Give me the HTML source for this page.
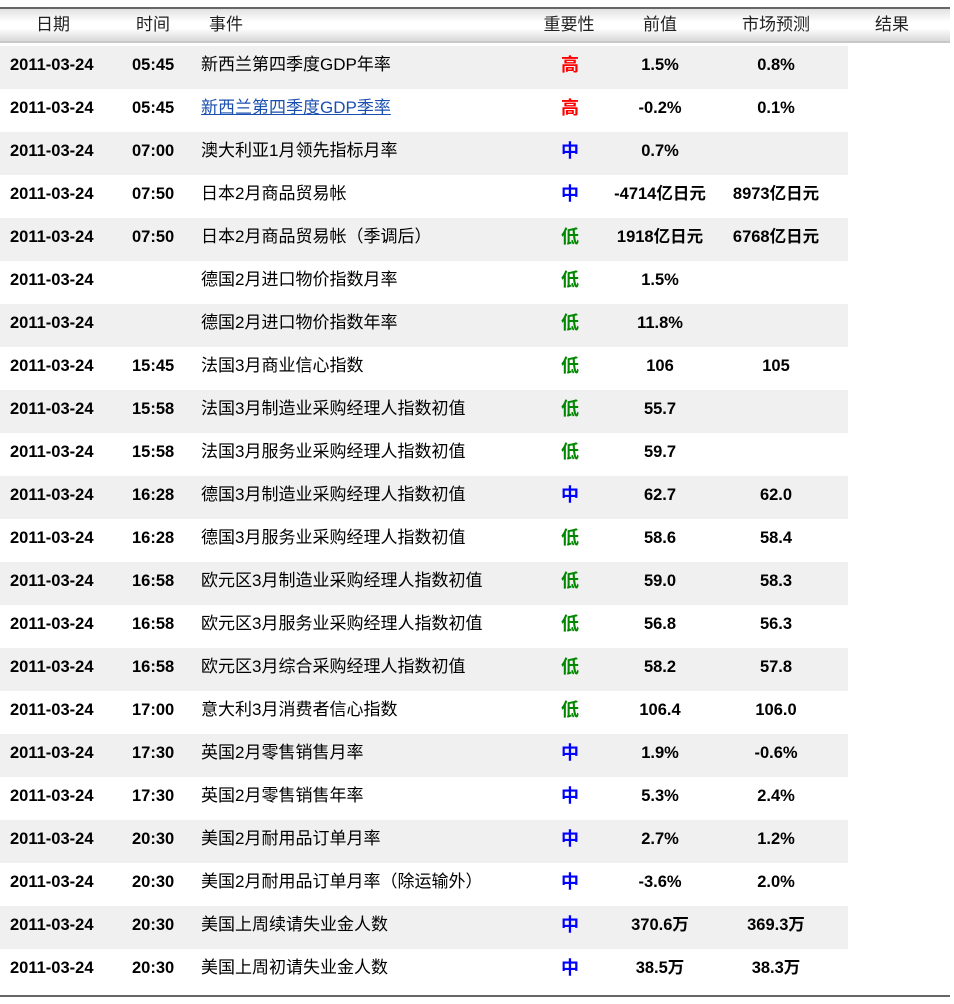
<!DOCTYPE html>
<html><head><meta charset="utf-8"><style>
body{margin:0;width:954px;height:1004px;background:#fff;position:relative;overflow:hidden;font-family:"Liberation Sans","Noto Sans CJK SC",sans-serif;}
.hd{position:absolute;left:0;top:7px;width:950px;height:36px;border-top:2px solid #666;background:linear-gradient(#e2e2e2,#fff 40%,#fff 60%,#d8d8d8);border-bottom:2px solid #c8c8c8;box-sizing:border-box;}
.hd span{position:absolute;top:0;line-height:32px;font-size:17px;color:#222;transform:translateX(-50%);}
.r{position:absolute;left:0;width:848px;height:43px;font-size:16.5px;}
.g{background:#f0f0f0;}
.r span{position:absolute;top:0;height:38px;line-height:38px;white-space:nowrap;}
.d{left:10px;font-weight:bold;}
.t{left:132px;font-weight:bold;}
.e{left:201px;font-size:17px;}
.c{transform:translateX(-50%);font-weight:bold;}
.r .i{left:570px;font-size:18px;}
.p{left:660px;}
.f{left:776px;}
.hi{color:#f00}.mid{color:#00f}.lo{color:#080}
a{color:#1a4fb0;text-decoration:underline;}
.bl{position:absolute;left:0;top:995px;width:950px;height:2px;background:#666;}
</style></head><body>
<div class="hd">
<span style="left:53px">日期</span><span style="left:153px">时间</span><span style="left:209px;transform:none">事件</span><span style="left:569px">重要性</span><span style="left:660px">前值</span><span style="left:776px">市场预测</span><span style="left:892px">结果</span>
</div>
<div class="r g" style="top:46px"><span class="d">2011-03-24</span><span class="t">05:45</span><span class="e">新西兰第四季度GDP年率</span><span class="c i hi">高</span><span class="c p">1.5%</span><span class="c f">0.8%</span></div>
<div class="r" style="top:89px"><span class="d">2011-03-24</span><span class="t">05:45</span><span class="e"><a>新西兰第四季度GDP季率</a></span><span class="c i hi">高</span><span class="c p">-0.2%</span><span class="c f">0.1%</span></div>
<div class="r g" style="top:132px"><span class="d">2011-03-24</span><span class="t">07:00</span><span class="e">澳大利亚1月领先指标月率</span><span class="c i mid">中</span><span class="c p">0.7%</span></div>
<div class="r" style="top:175px"><span class="d">2011-03-24</span><span class="t">07:50</span><span class="e">日本2月商品贸易帐</span><span class="c i mid">中</span><span class="c p">-4714亿日元</span><span class="c f">8973亿日元</span></div>
<div class="r g" style="top:218px"><span class="d">2011-03-24</span><span class="t">07:50</span><span class="e">日本2月商品贸易帐（季调后）</span><span class="c i lo">低</span><span class="c p">1918亿日元</span><span class="c f">6768亿日元</span></div>
<div class="r" style="top:261px"><span class="d">2011-03-24</span><span class="e">德国2月进口物价指数月率</span><span class="c i lo">低</span><span class="c p">1.5%</span></div>
<div class="r g" style="top:304px"><span class="d">2011-03-24</span><span class="e">德国2月进口物价指数年率</span><span class="c i lo">低</span><span class="c p">11.8%</span></div>
<div class="r" style="top:347px"><span class="d">2011-03-24</span><span class="t">15:45</span><span class="e">法国3月商业信心指数</span><span class="c i lo">低</span><span class="c p">106</span><span class="c f">105</span></div>
<div class="r g" style="top:390px"><span class="d">2011-03-24</span><span class="t">15:58</span><span class="e">法国3月制造业采购经理人指数初值</span><span class="c i lo">低</span><span class="c p">55.7</span></div>
<div class="r" style="top:433px"><span class="d">2011-03-24</span><span class="t">15:58</span><span class="e">法国3月服务业采购经理人指数初值</span><span class="c i lo">低</span><span class="c p">59.7</span></div>
<div class="r g" style="top:476px"><span class="d">2011-03-24</span><span class="t">16:28</span><span class="e">德国3月制造业采购经理人指数初值</span><span class="c i mid">中</span><span class="c p">62.7</span><span class="c f">62.0</span></div>
<div class="r" style="top:519px"><span class="d">2011-03-24</span><span class="t">16:28</span><span class="e">德国3月服务业采购经理人指数初值</span><span class="c i lo">低</span><span class="c p">58.6</span><span class="c f">58.4</span></div>
<div class="r g" style="top:562px"><span class="d">2011-03-24</span><span class="t">16:58</span><span class="e">欧元区3月制造业采购经理人指数初值</span><span class="c i lo">低</span><span class="c p">59.0</span><span class="c f">58.3</span></div>
<div class="r" style="top:605px"><span class="d">2011-03-24</span><span class="t">16:58</span><span class="e">欧元区3月服务业采购经理人指数初值</span><span class="c i lo">低</span><span class="c p">56.8</span><span class="c f">56.3</span></div>
<div class="r g" style="top:648px"><span class="d">2011-03-24</span><span class="t">16:58</span><span class="e">欧元区3月综合采购经理人指数初值</span><span class="c i lo">低</span><span class="c p">58.2</span><span class="c f">57.8</span></div>
<div class="r" style="top:691px"><span class="d">2011-03-24</span><span class="t">17:00</span><span class="e">意大利3月消费者信心指数</span><span class="c i lo">低</span><span class="c p">106.4</span><span class="c f">106.0</span></div>
<div class="r g" style="top:734px"><span class="d">2011-03-24</span><span class="t">17:30</span><span class="e">英国2月零售销售月率</span><span class="c i mid">中</span><span class="c p">1.9%</span><span class="c f">-0.6%</span></div>
<div class="r" style="top:777px"><span class="d">2011-03-24</span><span class="t">17:30</span><span class="e">英国2月零售销售年率</span><span class="c i mid">中</span><span class="c p">5.3%</span><span class="c f">2.4%</span></div>
<div class="r g" style="top:820px"><span class="d">2011-03-24</span><span class="t">20:30</span><span class="e">美国2月耐用品订单月率</span><span class="c i mid">中</span><span class="c p">2.7%</span><span class="c f">1.2%</span></div>
<div class="r" style="top:863px"><span class="d">2011-03-24</span><span class="t">20:30</span><span class="e">美国2月耐用品订单月率（除运输外）</span><span class="c i mid">中</span><span class="c p">-3.6%</span><span class="c f">2.0%</span></div>
<div class="r g" style="top:906px"><span class="d">2011-03-24</span><span class="t">20:30</span><span class="e">美国上周续请失业金人数</span><span class="c i mid">中</span><span class="c p">370.6万</span><span class="c f">369.3万</span></div>
<div class="r" style="top:949px"><span class="d">2011-03-24</span><span class="t">20:30</span><span class="e">美国上周初请失业金人数</span><span class="c i mid">中</span><span class="c p">38.5万</span><span class="c f">38.3万</span></div>
<div class="bl"></div>
</body></html>
